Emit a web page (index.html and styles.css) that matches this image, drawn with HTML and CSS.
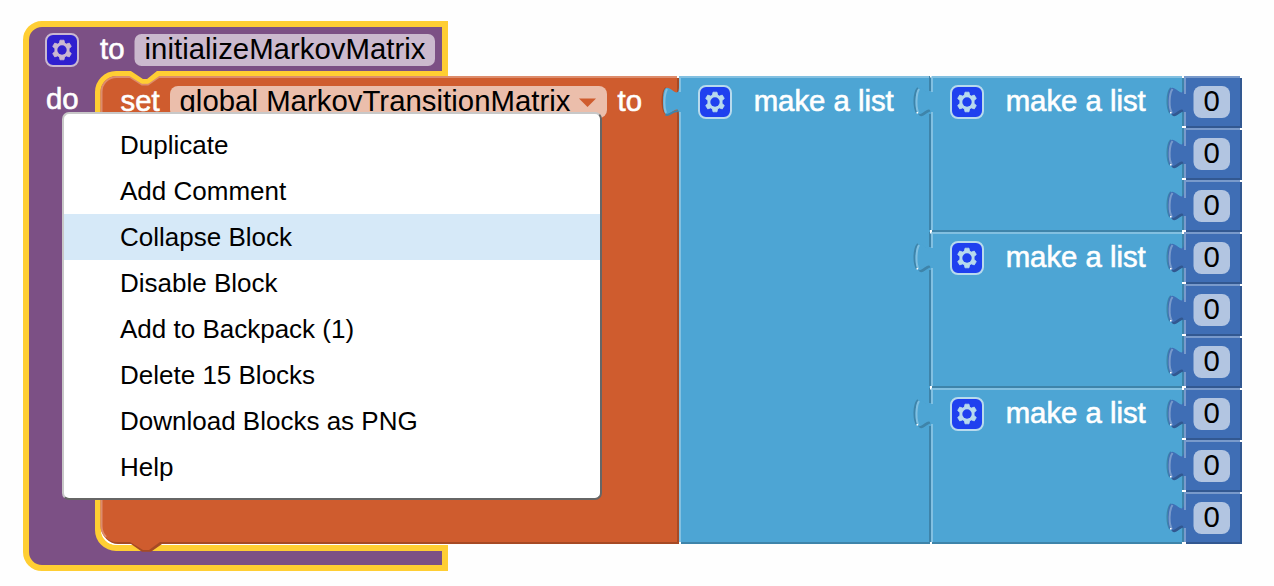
FILE: index.html
```
<!DOCTYPE html>
<html lang="en">
<head>
<meta charset="utf-8">
<title>Blocks workspace</title>
<link rel="stylesheet" href="styles.css">
</head>
<body>
<main class="workspace">
<svg class="canvas" width="1274" height="586" viewBox="0 0 1274 586">
  <defs>
    <g id="mutator">
      <rect class="mut-box" x="1" y="1" width="32" height="32" rx="7"/>
      <path class="mut-gear" d="M14.4 10.1 15 7.2H19L19.6 10.1 21.3 11.1 24.3 10.1 26.3 13.5 24.1 15.6V18.4L26.3 20.5 24.3 23.9 21.3 22.9 19.6 23.9 19 26.8H15L14.4 23.9 12.7 22.9 9.7 23.9 7.7 20.5 9.9 18.4V15.6L7.7 13.5 9.7 10.1 12.7 11.1Z"/>
      <circle class="mut-hole" cx="17" cy="17" r="4.7"/>
    </g>
    <path id="num-shape" d="M0 0H56V50H0V40C0 20-16 56-16 25S0 30 0 10Z"/>
    <g id="number">
      <use href="#num-shape" class="num-dark" x="2" y="2"/>
      <path class="list-dark-line" d="M-13 12C-17.500 17-17.500 31-14 37"/>
      <use href="#num-shape" class="num-main"/>
      <path class="num-main" d="M0 17H3V36H0Z"/>
      <path class="num-light" d="M1 50V36M-12 37C-15.500 32-15 18-11.500 13M1 18V1H56"/>
      <path class="speck" d="M-2 50h2v2h-2zM56 0h2v2h-2zM-14 36h1.500v1.500h-1.500z"/>
      <rect class="num-field" x="9.5" y="10" width="36.5" height="32" rx="8"/>
      <text class="value" x="19.5" y="35">0</text>
    </g>
    <path id="list-shape" d="M0 0H251V154H0V40C0 20-16 56-16 25S0 30 0 10Z"/>
    <g id="list">
      <use href="#list-shape" class="list-dark" x="2" y="2"/>
      <use href="#list-shape" class="list-main"/>
      <path class="list-main" d="M0 16H3V36H0Z"/>
      <path class="list-dark-line" d="M-13 12C-17.500 17-17.500 31-14 37M-1 0V15M-1 38V154"/>
      <path class="list-light" d="M1 154V36M-12.500 37C-15.500 32-15 18-12 13M1 16V1H251"/>
      <path class="speck" d="M-1 154h2v2h-2zM-1 0h1.5v1.5h-1.5zM-14.5 36h1.5v1.5h-1.5z"/>
      <use href="#mutator" x="19" y="9"/>
      <text class="label" x="74.700" y="35" textLength="140">make a list</text>
    </g>
  </defs>

  <!-- procedure definition -->
  <path class="proc" d="M445 24H42A16 16 0 0 0 26 40V552A16 16 0 0 0 42 568H445V548H116A18 18 0 0 1 98 530V92A18 18 0 0 1 116 74H130L142 82H148L158 74H445Z"/>
  <g class="proc-mutator"><use href="#mutator" x="45" y="33"/></g>
  <text class="label" x="100" y="59">to</text>
  <rect class="proc-field" x="134.500" y="34" width="300.500" height="32" rx="7"/>
  <text class="value" x="144.500" y="59" textLength="281">initializeMarkovMatrix</text>
  <text class="label" x="46" y="109">do</text>

  <!-- setter -->
  <path class="white" d="M101 520V530A16 16 0 0 0 117 545H450V540Z"/>
  <path class="set-dark" d="M118 90H600V78H679V544H162L151 551.800H142L131 544H118A16 16 0 0 1 102 528V106Z"/>
  <path class="set-main" d="M116.500 76H130L142 84H148L159 76H677V542H160L149 550H143L130 542H116.500A16 16 0 0 1 100.500 526V92A16 16 0 0 1 116.500 76Z"/>
  <path class="set-light" d="M106 537A16 16 0 0 1 101.500 526V92A15 15 0 0 1 116.500 77H130L142 84.500H148L159 77H677"/>
  <path class="notch" d="M124 74H130L142 81.500H148L158.500 74H164"/>
  <text class="label" x="120.500" y="111">set</text>
  <rect class="set-field" x="170" y="86" width="437" height="32" rx="8"/>
  <text class="value" x="179.500" y="111" textLength="391">global MarkovTransitionMatrix</text>
  <path class="arrow" d="M579 98.500H596L587.500 107Z"/>
  <text class="label" x="617.500" y="111">to</text>

  <!-- outer list -->
  <path class="set-tab-dark" d="M666 88C661.500 93 661.500 107 665 113"/>
  <path class="list-dark" d="M681 78H933V544H681Z"/>
  <path class="list-main" d="M679 76H931V542H679V116C679 96 663 132 663 101S679 106 679 86Z"/>
  <path class="list-main" d="M679 92H682V112H679Z"/>
  <path class="list-side" d="M665.500 114.500C669 117 671 111 678 111"/>
  <path class="list-light" d="M680 542V112M666 113C663.500 107 664 95 667 89M680 92V77H931"/>
  <path class="speck" d="M679 542h2v2h-2zM677.500 76h1.500v2h-1.500z"/>
  <use href="#mutator" x="698" y="85"/>
  <text class="label" x="753.700" y="111" textLength="140">make a list</text>

  <!-- rows -->
  <use href="#list" x="931" y="76"/>
  <use href="#list" x="931" y="232"/>
  <use href="#list" x="931" y="388"/>
  <use href="#number" x="1184" y="76"/>
  <use href="#number" x="1184" y="128"/>
  <use href="#number" x="1184" y="180"/>
  <use href="#number" x="1184" y="232"/>
  <use href="#number" x="1184" y="284"/>
  <use href="#number" x="1184" y="336"/>
  <use href="#number" x="1184" y="388"/>
  <use href="#number" x="1184" y="440"/>
  <use href="#number" x="1184" y="492"/>
</svg>
<ul class="menu">
  <li class="item">Duplicate</li>
  <li class="item">Add Comment</li>
  <li class="item active">Collapse Block</li>
  <li class="item">Disable Block</li>
  <li class="item">Add to Backpack (1)</li>
  <li class="item">Delete 15 Blocks</li>
  <li class="item">Download Blocks as PNG</li>
  <li class="item">Help</li>
</ul>
</main>
</body>
</html>
```
FILE: styles.css
```
body { margin: 0; background: #fefefe; font-family: "Liberation Sans", Arial, sans-serif; }
.workspace { position: relative; width: 1274px; height: 586px; overflow: hidden; }
.canvas { display: block; --mut-bg: #1f40ef; --mut-fg: #b8daed; }
.label, .value { font-size: 29.33px; }
.label { fill: #fff; stroke: #fff; stroke-width: 0.6px; }
.value { fill: #000; }
.mut-box { fill: var(--mut-bg); stroke: var(--mut-fg); stroke-width: 2px; }
.mut-gear { fill: var(--mut-fg); stroke: var(--mut-fg); stroke-width: 0.8px; stroke-linejoin: round; }
.mut-hole { fill: var(--mut-bg); }
.proc-mutator { --mut-bg: #3020cf; --mut-fg: #cab8d0; }
.proc { fill: #7c5085; stroke: #ffce33; stroke-width: 6px; }
.proc-field { fill: #cbb9ce; }
.notch { fill: none; stroke: #ffce33; stroke-width: 4px; }
.white, .speck { fill: #fff; }
.set-main { fill: #cf5c2e; }
.set-dark { fill: #a64a25; }
.set-light { fill: none; stroke: #dd8c6c; stroke-width: 2px; }
.set-field { fill: #ebbeab; }
.set-tab-dark { fill: none; stroke: #a64a25; stroke-width: 2px; }
.arrow { fill: #cf5c2e; }
.list-main { fill: #4da5d4; }
.list-dark { fill: #3e84aa; }
.list-light { fill: none; stroke: #82c0e1; stroke-width: 2px; }
.list-dark-line, .list-side { fill: none; stroke: #3e84aa; stroke-width: 2px; }
.num-main { fill: #3f6eb5; }
.num-dark { fill: #325891; }
.num-light { fill: none; stroke: #799acb; stroke-width: 2px; }
.num-field { fill: #b2c5e1; }
.menu {
  position: absolute; left: 62px; top: 112px; box-sizing: border-box;
  width: 540px; height: 388px; margin: 0; padding: 8px 0; list-style: none;
  background: #fff; border: 2px solid; border-color: #c8c8c8 #666 #666 #c8c8c8; border-radius: 7px;
}
.item { height: 46px; padding-left: 56px; font-size: 26px; line-height: 46px; color: #000; white-space: nowrap; }
.active { background: #d6e9f8; }
```
